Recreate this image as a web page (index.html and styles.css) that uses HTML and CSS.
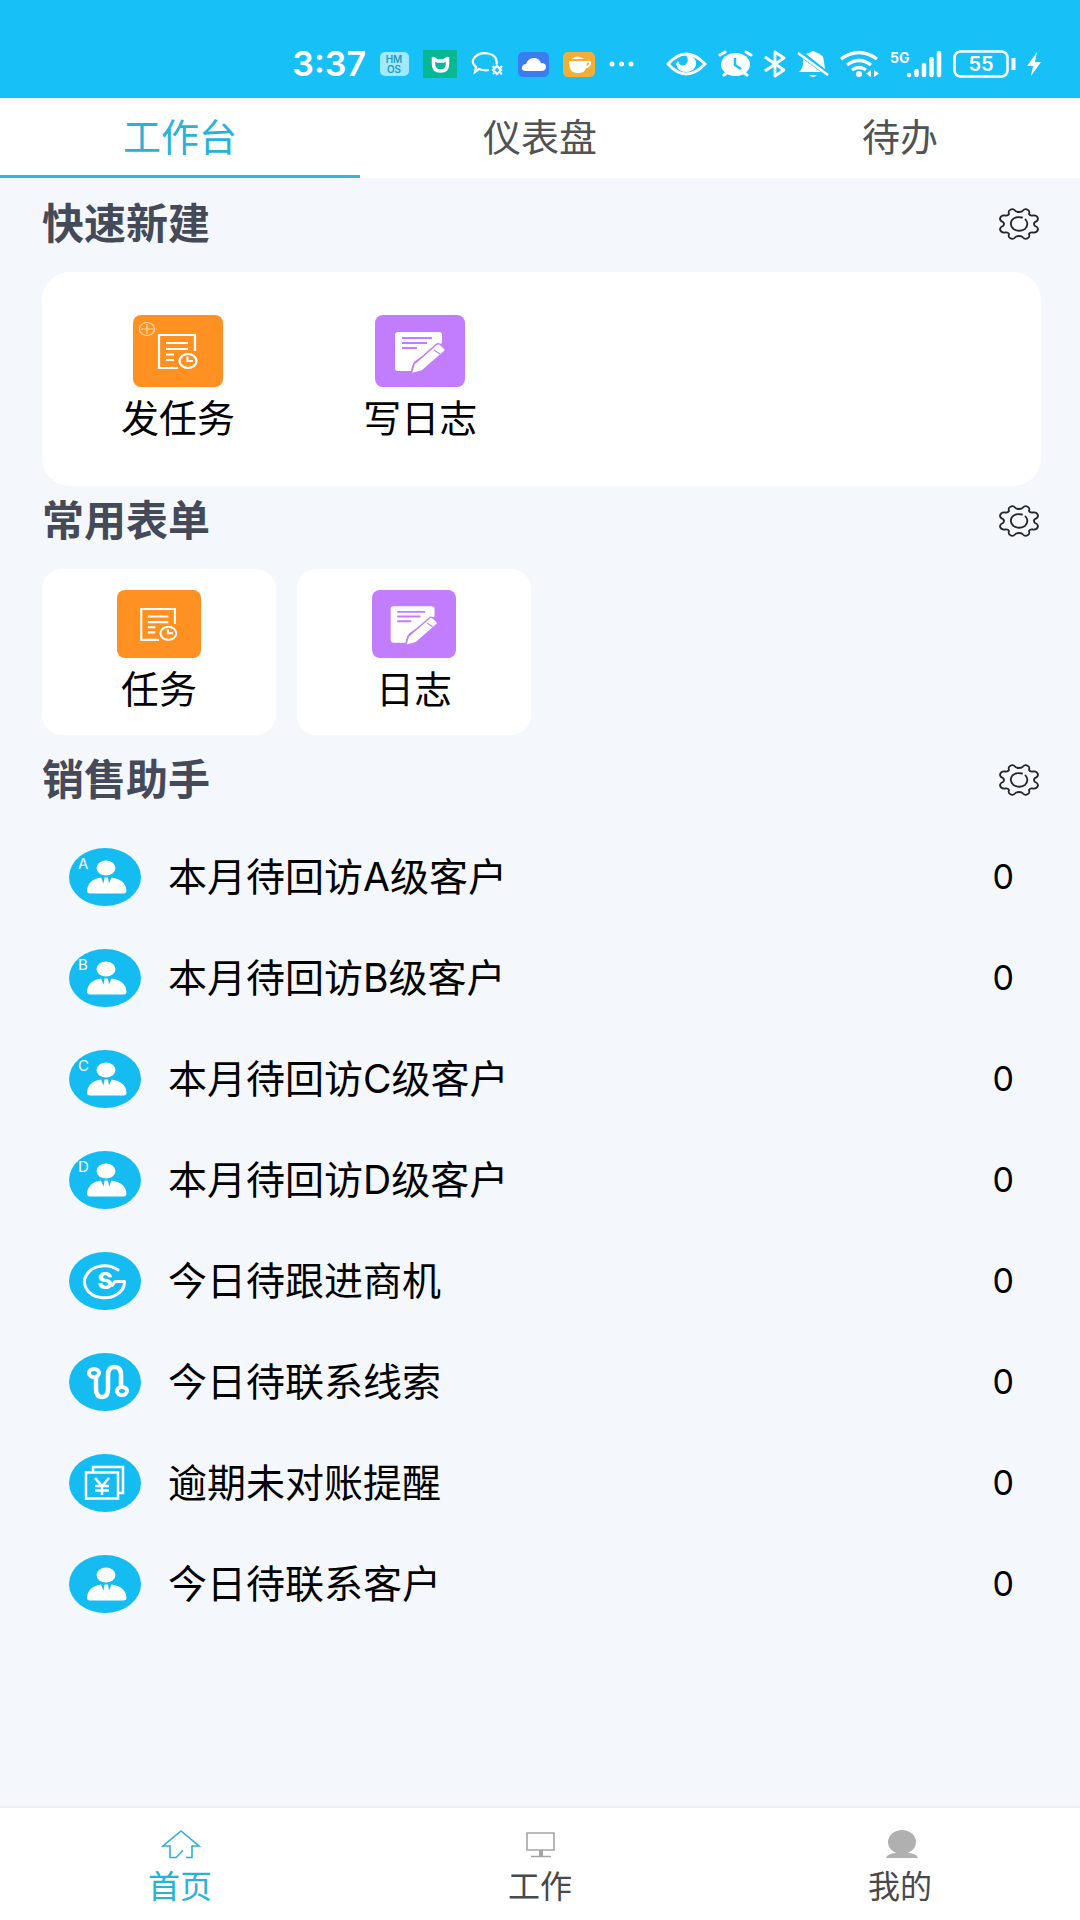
FILE: index.html
```html
<!DOCTYPE html>
<html lang="zh-CN">
<head>
<meta charset="utf-8">
<meta name="viewport" content="width=device-width, initial-scale=1">
<title>工作台</title>
<link rel="stylesheet" href="styles.css">
</head>
<body>
<svg class="sprite" aria-hidden="true">
  <symbol id="gear" viewBox="0 0 40 32">
    <path fill="none" stroke="#25272b" stroke-width="1.800" stroke-linejoin="round" d="M20 4Q23 4 24 2.500 26 0 29 2 31 3 30 6 31 8 34 7.500 38 7 39 10.500 39 13 36 14 34 16 36 18 39 19 39 21.500 38 25 34 24.500 31 24 30 26 31 29 29 30 26 32 24 29.500 23 28 20 28 17 28 16 29.500 14 32 11 30 9 29 10 26 9 24 6 24.500 2 25 1 21.500 1 19 4 18 6 16 4 14 1 13 1 10.500 2 7 6 7.500 9 8 10 6 9 3 11 2 14 0 16 2.500 17 4 20 4Z"/>
    <path fill="none" stroke="#25272b" stroke-width="1.800" stroke-linecap="round" d="M23 9.500Q16 8 13 12 10 17 14.500 21 20 24.500 26 21 30.500 16 26.500 11.500"/>
  </symbol>
  <symbol id="task" viewBox="0 0 90 72">
    <g fill="none" stroke="#fff" stroke-width="2.200">
      <path d="M62 36V20H26v33h19M33 28h22M33 34h22M33 39.500h8M33 45h8"/>
      <ellipse cx="55" cy="46" rx="8.500" ry="7"/>
      <path d="M54.500 41.500V46H60"/>
    </g>
  </symbol>
  <symbol id="note" viewBox="0 0 90 72">
    <path fill="#fff" d="M23 17h41q3 0 3 3v8L40 46q-3 3-4 10H23q-3 0-3-3V20q0-3 3-3Z"/>
    <path fill="none" stroke="#c27dff" stroke-width="2" d="M27 23h30M27 28h25M27 33h15"/>
    <path fill="#fff" stroke="#c27dff" stroke-width="1.500" d="M62 29q2-1 4 1l4 4q1 2-1 3L47 56l-11 3 3-10Z"/>
    <path fill="none" stroke="#c27dff" stroke-width="1.200" d="M59 35l6 4"/>
  </symbol>
  <symbol id="person" viewBox="0 0 72 58">
    <ellipse fill="#fff" cx="37" cy="20" rx="9.500" ry="7.500"/>
    <path fill="#fff" d="M32 29.500l2.500 6 1-6h3.500l1 6 2.500-6q14 2 15 13 0 3-3 3H21q-3 0-3-3 1-11 14-13Z"/>
  </symbol>
</svg>

<header class="status">
  <div class="status-left">
    <time class="clock">3:37</time>
    <svg width="29" height="24" viewBox="0 0 29 24"><rect width="29" height="24" rx="5" fill="#a0eaff"/><g class="tiny" fill="#2a9cb8" text-anchor="middle"><text x="14" y="11">HM</text><text x="14" y="21">OS</text></g></svg>
    <svg width="34" height="28" viewBox="0 0 34 28"><path fill="#06b994" d="M0 0h34v28H0z"/><path fill="none" stroke="#fff" stroke-width="3.500" d="M10.500 7v7q0 7 7 7t7-7V7M9.500 8l5 3h6l5-3"/></svg>
    <svg width="33" height="24" viewBox="0 0 33 24"><g fill="none" stroke="#fff" stroke-width="2.200"><path d="M18 18q-5 1-10-1l-4 3 1-5Q-1 10 4 5 9 0 17 1.500q10 2 8.500 11"/><path d="M26 14l4 4-4 4-4-4zM22 14l1 2M31 14l-2 2M22 22l1-1M31 22l-2-1"/></g></svg>
    <svg width="31" height="25" viewBox="0 0 31 25"><rect width="31" height="25" rx="5" fill="#397df0"/><path fill="#fff" d="M8 19q-5 0-4-4 1-3 4-3 2-6 8-6 5 0 7 5 5 0 5 4t-5 4Z"/></svg>
    <svg width="32" height="25" viewBox="0 0 32 25"><rect width="32" height="25" rx="5" fill="#f5ae35"/><path fill="#fff" d="M6 9h18q0 12-7 12h-4Q6 21 6 9ZM9 7q5-5 12 0Z"/><path fill="none" stroke="#fff" stroke-width="2" d="M24 10q4-1 3 2-1 3-4 3"/></svg>
    <svg width="25" height="6" viewBox="0 0 25 6"><g fill="#fff"><circle cx="3" cy="3" r="2.500"/><circle cx="12.500" cy="3" r="2.500"/><circle cx="22" cy="3" r="2.500"/></g></svg>
  </div>
  <div class="status-right">
    <svg width="41" height="24" viewBox="0 0 41 24"><path fill="none" stroke="#fff" stroke-width="2.800" d="M2 12Q20-8 39 12 20 32 2 12Z"/><path fill="#fff" d="M20 3q11 1 10 10-2 7-10 7t-10-8l2-3q2 6 7 4 5-4 1-10Z"/></svg>
    <svg width="35" height="28" viewBox="0 0 35 28"><ellipse cx="17.500" cy="14.500" rx="14.500" ry="11.500" fill="#fff"/><path stroke="#fff" stroke-width="3" stroke-linecap="round" d="M2 5l5-3M33 5l-5-3M6 25l4-3M29 25l-4-3"/><path fill="none" stroke="#18c0f8" stroke-width="2.500" d="M17 8v7l6 4"/></svg>
    <svg width="22" height="28" viewBox="0 0 22 28"><path fill="none" stroke="#fff" stroke-width="2.800" stroke-linejoin="round" d="M1 7l19 13-9 6V2l9 6L1 21"/></svg>
    <svg width="32" height="28" viewBox="0 0 32 28"><path fill="#fff" d="M2 22q5-4 4-13l18 13ZM9 4l5-2q2-2 4 0 9 2 9 10l1 7ZM12 25h8q-4 4-8 0Z"/><path stroke="#fff" stroke-width="2.500" d="M1 3l30 22"/></svg>
    <svg width="39" height="28" viewBox="0 0 39 28"><g fill="none" stroke="#fff" stroke-width="3.200"><path d="M1 9Q19-4 37 9M7 15q12-9 24 0M12 20q7-5 14 0"/></g><circle cx="19" cy="24" r="3" fill="#fff"/><path fill="#fff" d="M31 20v7l-5-3.500zM34 20v7l5-3.500z"/></svg>
    <svg width="52" height="28" viewBox="0 0 52 28"><text class="net" x="0" y="13" fill="#fff">5G</text><path stroke="#fff" stroke-width="4.500" stroke-linecap="round" d="M19 25v0M26.500 21v4M34 15v10M41.500 9v16M49 3v22"/></svg>
    <svg width="63" height="28" viewBox="0 0 63 28"><rect x="1.500" y="1.500" width="53" height="25" rx="6" fill="none" stroke="#fff" stroke-width="2.500"/><path stroke="#fff" stroke-width="4" d="M60.500 8v12"/><text class="charge" x="28" y="21" text-anchor="middle" fill="#fff">55</text></svg>
    <svg width="14" height="24" viewBox="0 0 14 24"><path fill="#fff" d="M10 0L0 14h6L4 24l10-14H8Z"/></svg>
  </div>
</header>

<div class="tabs" role="tablist">
  <button class="tab active" role="tab" aria-selected="true">工作台</button>
  <button class="tab" role="tab" aria-selected="false">仪表盘</button>
  <button class="tab" role="tab" aria-selected="false">待办</button>
</div>

<main class="main">
  <section>
    <div class="head"><h2>快速新建</h2><button class="set" aria-label="设置"><svg width="40" height="32"><use href="#gear"/></svg></button></div>
    <div class="panel">
      <a class="item" href="#new-task">
        <svg class="tile orange" viewBox="0 0 90 72"><use href="#task"/><g fill="none" stroke="#ffd9ac" stroke-width="1.200"><ellipse cx="14" cy="14" rx="7.500" ry="6.500"/><path d="M8 14h12M14 9v10"/></g></svg>
        <span>发任务</span>
      </a>
      <a class="item" href="#new-log">
        <svg class="tile purple" viewBox="0 0 90 72"><use href="#note"/></svg>
        <span>写日志</span>
      </a>
    </div>
  </section>

  <section>
    <div class="head"><h2>常用表单</h2><button class="set" aria-label="设置"><svg width="40" height="32"><use href="#gear"/></svg></button></div>
    <div class="forms">
      <a class="form" href="#task-list"><svg class="tile small orange" viewBox="0 0 90 72"><use href="#task"/></svg><span>任务</span></a>
      <a class="form" href="#log-list"><svg class="tile small purple" viewBox="0 0 90 72"><use href="#note"/></svg><span>日志</span></a>
    </div>
  </section>

  <section class="assist">
    <div class="head"><h2>销售助手</h2><button class="set" aria-label="设置"><svg width="40" height="32"><use href="#gear"/></svg></button></div>
    <ul class="list">
      <li><a class="row" href="#a"><svg class="badge" viewBox="0 0 72 58"><use href="#person"/><text x="9" y="21">A</text></svg><span>本月待回访A级客户</span><span class="count">0</span></a></li>
      <li><a class="row" href="#b"><svg class="badge" viewBox="0 0 72 58"><use href="#person"/><text x="9" y="21">B</text></svg><span>本月待回访B级客户</span><span class="count">0</span></a></li>
      <li><a class="row" href="#c"><svg class="badge" viewBox="0 0 72 58"><use href="#person"/><text x="9" y="21">C</text></svg><span>本月待回访C级客户</span><span class="count">0</span></a></li>
      <li><a class="row" href="#d"><svg class="badge" viewBox="0 0 72 58"><use href="#person"/><text x="9" y="21">D</text></svg><span>本月待回访D级客户</span><span class="count">0</span></a></li>
      <li><a class="row" href="#deals"><svg class="badge" viewBox="0 0 72 58"><path fill="none" stroke="#fff" stroke-width="3" stroke-linecap="round" stroke-linejoin="round" d="M49 18A20 16 0 1 0 55.500 29.500H46l-3 4"/><text class="mark" x="36" y="37" text-anchor="middle">S</text></svg><span>今日待跟进商机</span><span class="count">0</span></a></li>
      <li><a class="row" href="#leads"><svg class="badge" viewBox="0 0 72 58"><g fill="none" stroke="#fff"><path stroke-width="4.500" d="M27 23v13q0 8 6 8t6-8V22q0-8 6.500-8t6.500 8v11"/><ellipse cx="25" cy="20" rx="5" ry="4" stroke-width="4"/><ellipse cx="53" cy="38" rx="5" ry="4" stroke-width="4"/></g></svg><span>今日待联系线索</span><span class="count">0</span></a></li>
      <li><a class="row" href="#bills"><svg class="badge" viewBox="0 0 72 58"><path fill="none" stroke="#fff" stroke-width="2.500" d="M17 18.500h32v26H17zM24 18v-5h30v26h-5M26 24l7 8 7-8M33 32v9M26 32h14M26 36.500h14"/></svg><span>逾期未对账提醒</span><span class="count">0</span></a></li>
      <li><a class="row" href="#contacts"><svg class="badge" viewBox="0 0 72 58"><use href="#person"/></svg><span>今日待联系客户</span><span class="count">0</span></a></li>
    </ul>
  </section>
</main>

<nav class="nav">
  <a class="active" href="#home"><svg width="44" height="30" viewBox="0 0 44 30"><path fill="none" stroke="#2fb0d0" stroke-width="1.600" d="M28 28.500h6V17h7L23 2 5 17h7v11.500h6l7-7"/></svg><span>首页</span></a>
  <a href="#work"><svg width="44" height="30" viewBox="0 0 44 30"><path fill="none" stroke="#a5a5a5" stroke-width="1.600" d="M9 4h27v17H9zM13 27.500h20"/><path fill="#a5a5a5" d="M21 21h4v6h-4z"/></svg><span>工作</span></a>
  <a href="#mine"><svg width="44" height="30" viewBox="0 0 44 30"><ellipse cx="24" cy="13" rx="14" ry="12" fill="#b0b0b0"/><path fill="#b0b0b0" d="M8 29q2-5 11-5h10q9 0 11 5Z"/></svg><span>我的</span></a>
</nav>
</body>
</html>
```
FILE: styles.css
```css
* { box-sizing: border-box; }

body {
  margin: 0;
  min-height: 100vh;
  display: flex;
  flex-direction: column;
  background: #f4f7fb;
  color: #000;
  font-family: Inter, "Noto Sans CJK SC", sans-serif;
}

a { color: inherit; text-decoration: none; }
button { border: 0; padding: 0; background: none; font: inherit; color: inherit; }
svg { display: block; flex: none; }
.sprite { position: absolute; width: 0; height: 0; }

.status {
  display: flex;
  justify-content: flex-end;
  align-items: center;
  gap: 32px;
  height: 98px;
  padding: 30px 39px 0 0;
  background: #18c0f8;
}
.status-left, .status-right { display: flex; align-items: center; }
.status-left { gap: 14px; }
.status-right { gap: 11px; }
.clock { color: #fff; font-size: 34px; line-height: 40px; font-weight: 600; }
.tiny { font-size: 10px; font-weight: 600; }
.net { font-size: 14px; font-weight: 700; }
.charge { font-size: 20px; font-weight: 600; }

.tabs {
  display: grid;
  grid-template-columns: repeat(3, 1fr);
  background: #fff;
}
.tab {
  height: 80px;
  border-bottom: 3px solid #fff;
  font-size: 38px;
  line-height: 76px;
  color: #505256;
}
.tab.active { color: #29b2d6; border-color: #35b4d4; }

.main { flex: 1; padding: 11px 39px 0 42px; }
.head {
  display: flex;
  align-items: center;
  justify-content: space-between;
  height: 70px;
  margin-bottom: 13px;
}
.head h2 {
  margin: 0;
  font-size: 42px;
  line-height: 60px;
  font-weight: 700;
  color: #454a59;
}
.set { padding: 4px 2px; }

.panel {
  display: grid;
  grid-template-columns: repeat(4, 1fr);
  min-height: 214px;
  padding: 43px 15px 0;
  border-radius: 28px;
  background: #fff;
}
.item, .form {
  display: flex;
  flex-direction: column;
  align-items: center;
  font-size: 38px;
  line-height: 48px;
}
.item { gap: 7px; }
.tile { width: 90px; height: 72px; border-radius: 8px; }
.tile.small { width: 84px; height: 68px; }
.orange { background: #ff9122; }
.purple { background: #c27dff; }

.forms { display: grid; grid-template-columns: repeat(4, 1fr); gap: 21px; }
.form {
  min-height: 166px;
  padding-top: 21px;
  gap: 7px;
  border-radius: 20px;
  background: #fff;
}

.assist { margin-top: 10px; }
.assist .head { margin-bottom: 11px; }
.list { margin: 0; padding: 0; list-style: none; }
.row {
  display: flex;
  align-items: center;
  gap: 27px;
  height: 101px;
  padding: 0 27px;
  font-size: 39px;
  line-height: 50px;
}
.badge { width: 72px; height: 58px; border-radius: 50%; background: #14bcf2; }
.badge text { fill: #fff; font-size: 15px; }
.badge .mark { font-size: 23px; font-weight: 800; }
.count { margin-left: auto; font-size: 34px; }

.nav {
  display: grid;
  grid-template-columns: repeat(3, 1fr);
  border-top: 2px solid #f0eff5;
  background: #fff;
  color: #47494d;
}
.nav a {
  display: flex;
  flex-direction: column;
  align-items: center;
  gap: 6px;
  padding: 21px 0 11px;
  font-size: 32px;
  line-height: 44px;
}
.nav .active { color: #29b2d6; }
```
